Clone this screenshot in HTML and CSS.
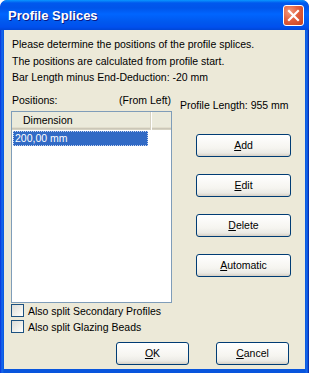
FILE: index.html
```html
<!DOCTYPE html>
<html lang="en">
<head>
  <meta charset="UTF-8" />
  <title>Profile Splices</title>
  <link rel="stylesheet" href="styles.css">
</head>
<body>
  <div class="window">
    <div class="titlebar">
      <span class="title">Profile Splices</span>
      <span class="close-btn">
        <svg width="13" height="13" viewBox="0 0 13 13">
          <path d="M2 2 L11 11 M11 2 L2 11" stroke="#fff" stroke-width="2.2" stroke-linecap="square"/>
        </svg>
      </span>
    </div>

    <div class="client">
      <div class="intro">
        <div>Please determine the positions of the profile splices.</div>
        <div>The positions are calculated from profile start.</div>
        <div>Bar Length minus End-Deduction: -20 mm</div>
      </div>

      <div class="main">
        <div class="left-col">
          <div class="list-label">
            <span>Positions:</span>
            <span>(From Left)</span>
          </div>
          <div class="listbox">
            <div class="list-header">
              <div class="col-head">Dimension</div>
              <div class="col-rest"></div>
            </div>
            <div class="list-row selected">200,00 mm</div>
          </div>
        </div>

        <div class="right-col">
          <div class="profile-length">Profile Length: 955 mm</div>
          <div class="side-buttons">
            <button class="btn"><u>A</u>dd</button>
            <button class="btn"><u>E</u>dit</button>
            <button class="btn"><u>D</u>elete</button>
            <button class="btn"><u>A</u>utomatic</button>
          </div>
        </div>
      </div>

      <div class="checks">
        <label class="check"><span class="box"></span>Also split Secondary Profiles</label>
        <label class="check"><span class="box"></span>Also split Glazing Beads</label>
      </div>

      <div class="footer-buttons">
        <button class="btn small"><u>O</u>K</button>
        <button class="btn small"><u>C</u>ancel</button>
      </div>
    </div>
  </div>
</body>
</html>
```

FILE: styles.css
```css
body {
  margin: 0;
  background: #fff;
  font-family: Tahoma, "Liberation Sans", Arial, sans-serif;
  font-size: 10.5px;
  color: #000;
}

.window {
  width: 309px;
  height: 373px;
  box-sizing: border-box;
  background: linear-gradient(to right, #0831d9 0, #166aee 2px, #0855dd 4px, #0855dd 305px, #166aee 307px, #001ea0 309px);
  border-radius: 7px 7px 0 0;
  display: flex;
  flex-direction: column;
  overflow: hidden;
}

.titlebar {
  height: 30px;
  flex: none;
  display: flex;
  align-items: center;
  justify-content: space-between;
  padding: 0 5px 0 8px;
  background: linear-gradient(to bottom, #0997ff 0, #0058ee 3px, #0055ea 8px, #0065ff 14px, #0058ee 22px, #0050ee 27px, #0046d6 30px);
  border-radius: 7px 7px 0 0;
}

.title {
  color: #fff;
  font-family: "Liberation Sans", Arial, sans-serif;
  font-weight: bold;
  font-size: 13px;
  text-shadow: 1px 1px 0 #0a1883;
  margin-top: 1px;
}

.close-btn {
  width: 19px;
  height: 19px;
  border: 1px solid #fff;
  border-radius: 3px;
  background: radial-gradient(circle at 30% 30%, #f29b7d 0, #e2603e 45%, #c6411f 100%);
  display: flex;
  align-items: center;
  justify-content: center;
  margin-top: 1px;
}

.client {
  flex: 1;
  margin: 0 4px 4px 4px;
  background: #ece9d8;
  display: flex;
  flex-direction: column;
}

.intro {
  padding: 6px 8px 0;
  line-height: 16.5px;
}

.main {
  display: flex;
  margin-top: 6px;
}

.left-col {
  margin-left: 7px;
  width: 161px;
}

.list-label {
  display: flex;
  justify-content: space-between;
  line-height: 16px;
  padding: 0 1px 0 1px;
  height: 19px;
}

.listbox {
  height: 190px;
  border: 1px solid #7f9db9;
  background: #fff;
}

.list-header {
  display: flex;
  height: 18px;
  background: #ebeadb;
  box-shadow: inset 0 -1px 0 #d6d2c2, inset 0 -2px 0 #cbc7b8, inset 0 -3px 0 #e2decd;
}

.col-head {
  width: 127px;
  padding-left: 11px;
  line-height: 17px;
  border-right: 1px solid #d6d2c2;
  box-shadow: 1px 0 0 #fff;
}

.col-rest {
  flex: 1;
}

.list-row {
  height: 15px;
  line-height: 15px;
  padding-left: 2px;
  width: 133px;
  margin-left: 1px;
  margin-top: 1px;
}

.list-row.selected {
  background: #316ac5;
  color: #fff;
  outline: 1px dotted #c8d6f0;
  outline-offset: -1px;
}

.right-col {
  margin-left: 8px;
  display: flex;
  flex-direction: column;
}

.profile-length {
  margin-top: 5px;
  line-height: 16px;
  white-space: nowrap;
}

.side-buttons {
  display: flex;
  flex-direction: column;
  gap: 17px;
  margin-top: 21px;
  margin-left: 16px;
}

.btn {
  width: 95px;
  height: 23px;
  padding: 0;
  font-family: Tahoma, "Liberation Sans", Arial, sans-serif;
  font-size: 10.5px;
  color: #000;
  border: 1px solid #003c74;
  border-radius: 3px;
  background: linear-gradient(to bottom, #ffffff 0, #f6f5f0 60%, #ecebe6 85%, #d6d0c5 100%);
}

.btn u {
  text-decoration: underline;
}

.btn.small {
  width: 73px;
}

.checks {
  margin-top: 0;
  margin-left: 7px;
}

.check {
  display: flex;
  align-items: center;
  height: 16px;
}

.box {
  width: 11px;
  height: 11px;
  border: 1px solid #1c5180;
  background: linear-gradient(135deg, #dcdcd7 0, #f4f4f0 70%, #fff 100%);
  margin-right: 4px;
}

.footer-buttons {
  display: flex;
  justify-content: flex-end;
  gap: 27px;
  margin-top: 7px;
  padding-right: 16px;
}
```
